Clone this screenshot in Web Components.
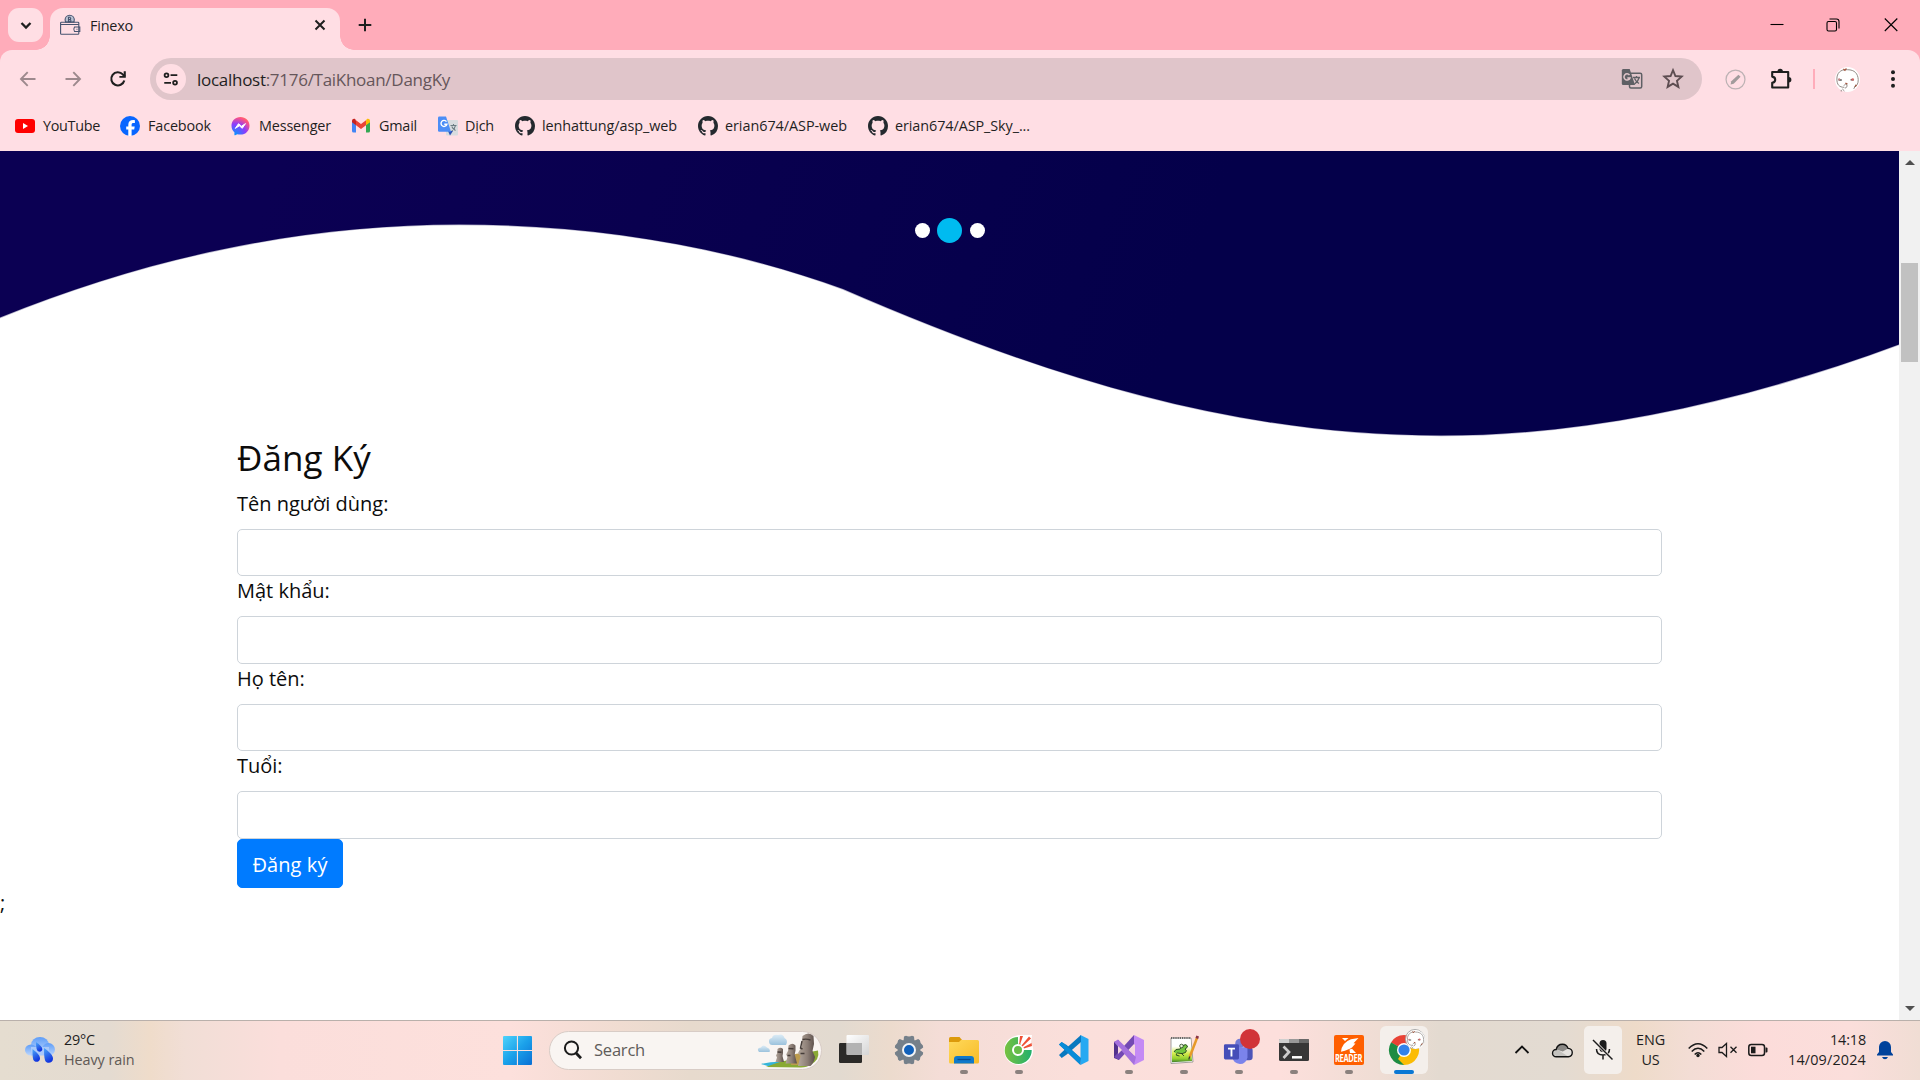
<!DOCTYPE html>
<html lang="vi">
<head>
<meta charset="utf-8">
<title>Finexo</title>
<style>
html,body{margin:0;padding:0;width:1920px;height:1080px;overflow:hidden;background:#fff}
body{display:flex;flex-direction:column;font-family:"Open Sans","Noto Sans",sans-serif;color:#1f1f1f}
</style>
</head>
<body>
<tab-strip><browser-tab>Finexo</browser-tab></tab-strip>
<tool-bar></tool-bar>
<bookmark-bar>
<book-mark icon="youtube" w="57">YouTube</book-mark>
<book-mark icon="facebook" w="63">Facebook</book-mark>
<book-mark icon="messenger" w="72">Messenger</book-mark>
<book-mark icon="gmail" w="38">Gmail</book-mark>
<book-mark icon="gtranslate" w="29">Dịch</book-mark>
<book-mark icon="github" w="135">lenhattung/asp_web</book-mark>
<book-mark icon="github" w="122">erian674/ASP-web</book-mark>
<book-mark icon="github" w="135">erian674/ASP_Sky_...</book-mark>
</bookmark-bar>
<page-view>
<hero-wave></hero-wave>
<signup-form>
<form-field>Tên người dùng:</form-field>
<form-field>Mật khẩu:</form-field>
<form-field>Họ tên:</form-field>
<form-field>Tuổi:</form-field>
</signup-form>
</page-view>
<task-bar></task-bar>
<script>
const ICONS={
youtube:['0 0 20 20','<rect y="3" width="20" height="14" rx="3" fill="#f00"/><path d="M8 7v6l5-3z" fill="#fff"/>'],
facebook:['0 0 20 20','<circle cx="10" cy="10" r="10" fill="#0866ff"/><path d="M8.3 20v-6.6H6.2v-3h2.1V9c0-3.5 1.6-5 4.9-5 .5 0 1.3.1 1.7.2v2.7h-1.3c-1.5 0-2 .6-2 2v1.5h3.1l-.5 3h-2.6V20c-1 .1-2.300.1-3.300 0z" fill="#fff"/>'],
messenger:['0 0 20 20','<defs><radialGradient id="m" cx=".2" cy="1" r="1.1"><stop offset="0" stop-color="#09f"/><stop offset=".55" stop-color="#8a3cff"/><stop offset=".9" stop-color="#ff5280"/><stop offset="1" stop-color="#ff7061"/></radialGradient></defs><path d="M9.500 1C4.300 1 .5 4.800.5 9.700c0 2.700 1.100 5 2.900 6.600v2.400c0 .4.400.6.800.5l2-1c1 .3 2.100.4 3.300.4 5.200 0 9-3.900 9-8.900S14.700 1 9.500 1z" fill="url(#m)"/><path d="M4.300 12.400 7.500 7.700l3 2.500 4-2.600-3.200 4.700-3-2.500z" fill="#fff" stroke="#fff" stroke-width="1" stroke-linejoin="round"/>'],
gmail:['0 0 20 20','<path d="M1 5.500V15q0 1.500 1.500 1.500H5V8.600z" fill="#4285f4"/><path d="M15 8.600v7.900h2.500Q19 16.500 19 15V5.500z" fill="#34a853"/><path d="M15 4.500v4.700l4-3V4.800c0-1.800-2-2.600-3.300-1.600z" fill="#fbbc04"/><path d="M1 6.200l4 3V4.500l-.7-1.300C3 2.200 1 3 1 4.800z" fill="#c5221f"/><path d="M5 9.200V4.300L10 8l5-3.700v4.900L10 13z" fill="#ea4335"/>'],
gtranslate:['0 0 20 20','<rect x="8" y="4" width="12" height="15.500" rx="1" fill="#d8dcdf"/><path d="M10 15h5l-3 4.500z" fill="#3054b5"/><path d="M1.200.5H8l5 15.200H1.200Q0 15.700 0 14.500V1.700Q0 .5 1.200.5z" fill="#4c8df6"/><path d="M8.500 5.700A3 3 0 1 0 8.900 8.300H6.300" fill="none" stroke="#fff" stroke-width="1.400"/><path d="M12.500 9.500h6M15.500 8v1.500M17.500 9.700c-.6 2.500-2 4-3.700 5M13.800 10.500c.8 2 2.200 3.200 3.700 4" fill="none" stroke="#6b7d83" stroke-width="1.100"/>'],
github:['0 0 16 16','<path fill="#24292e" d="M8 0C3.580 0 0 3.580 0 8c0 3.540 2.290 6.530 5.470 7.590.4.070.55-.170.55-.380 0-.190-.010-.820-.010-1.490-2.010.370-2.530-.490-2.690-.940-.090-.230-.480-.940-.820-1.130-.280-.150-.680-.520-.010-.530.630-.010 1.080.580 1.230.820.720 1.210 1.870.870 2.330.660.070-.520.280-.870.510-1.070-1.780-.2-3.640-.890-3.640-3.950 0-.870.310-1.590.820-2.150-.080-.2-.360-1.020.080-2.120 0 0 .670-.210 2.200.820.640-.180 1.320-.270 2-.270s1.360.090 2 .270c1.530-1.040 2.200-.820 2.200-.820.440 1.100.160 1.920.080 2.120.510.560.820 1.270.820 2.150 0 3.070-1.870 3.750-3.650 3.950.290.250.540.730.540 1.480 0 1.070-.010 1.930-.010 2.200 0 .210.150.460.550.380A8.010 8.010 0 0 0 16 8c0-4.420-3.580-8-8-8z"/>'],
down:['0 0 20 20','<path d="M5.500 8l4.500 4.500L14.500 8" fill="none" stroke="#1f1f1f" stroke-width="2.300"/>'],
wallet:['0 0 20 20','<g fill="none" stroke="#46536f" stroke-width="1.100"><circle cx="9.700" cy="4.800" r="4.600" fill="#b9c1d1"/><rect x=".6" y="7.300" width="18.200" height="12" rx=".8" fill="#ffdee4"/><path d="M.6 9.500h18.200M5 7h9.500M14.500 12h5.300v4.500h-5.300q-1.500-2.200 0-4.500zM16.500 14.200h1"/><path d="M8.500 2.300v4.500h1.800q1.200-1.100 0-2.200 1-1.300-.2-2.300zM8.500 4.600h2"/></g>'],
close:['0 0 20 20','<path d="M5.500 5.500l9 9m0-9l-9 9" stroke="#1f1f1f" stroke-width="2"/>'],
plus:['0 0 20 20','<path d="M10 3.700v12.600M3.700 10h12.600" stroke="#1f1f1f" stroke-width="2"/>'],
min:['0 0 20 20','<path d="M3.500 9.500h13" stroke="#000" stroke-width="1.100"/>'],
restore:['0 0 20 20','<g fill="none" stroke="#000" stroke-width="1.100"><rect x="4" y="6.500" width="9.500" height="9.500" rx="1.500"/><path d="M6.500 4h7q2.500 0 2.500 2.500v7"/></g>'],
winclose:['0 0 20 20','<path d="M3.800 3.500l12.500 12.500m0-12.500L3.800 16" stroke="#000" stroke-width="1.100"/>'],
back:['0 0 20 20','<path d="M17.500 10H3.500M9.700 3.200L3 10l6.700 6.800" fill="none" stroke="#9d898d" stroke-width="1.900"/>'],
fwd:['0 0 20 20','<path d="M2.500 10h14M10.300 3.200L17 10l-6.700 6.800" fill="none" stroke="#9d898d" stroke-width="1.900"/>'],
reload:['0 0 20 20','<path d="M16.300 11.500A6.600 6.600 0 1 1 14.800 5.400L17 7.500" fill="none" stroke="#1f1f1f" stroke-width="2.100"/><path d="M17.800 2.300v6.400h-6.400V7h4.300V2.300z" fill="#1f1f1f"/>'],
tune:['0 0 20 20','<g fill="none" stroke="#1f1f1f" stroke-width="2"><circle cx="5" cy="5.800" r="2.100"/><path d="M9.500 5.800h7.500M2.500 14.200H10"/><circle cx="14.500" cy="14.200" r="2.100"/></g>'],
omtranslate:['0 0 22 22','<rect x="8.500" y="5.300" width="12.200" height="14.800" rx="1.500" fill="none" stroke="#5f6065" stroke-width="1.500"/><path d="M2.200 1h6.500l5.300 16H2.200Q.8 17 .8 15.500v-13Q.8 1 2.200 1z" fill="#5f6065"/><path d="M8.500 7A3.100 3.100 0 1 0 9 9.900H6.300" fill="none" stroke="#e0c5ca" stroke-width="1.500"/><path d="M12 9.500h7M15.500 8v1.500M18 10c-.7 2.700-2.300 4.500-4.500 6M13.500 10.500c1 2.200 2.500 3.800 4.500 5" fill="none" stroke="#5f6065" stroke-width="1.300"/>'],
star:['0 0 20 20','<path d="M10 2l2.200 5.300 5.700.5-4.300 3.800 1.300 5.600L10 14.200l-4.900 3 1.300-5.600L2.100 7.800l5.700-.5z" fill="none" stroke="#5d4d51" stroke-width="1.700"/>'],
pencil:['0 0 20 20','<circle cx="10" cy="10" r="9" fill="none" stroke="#bdb2b4" stroke-width="1.200"/><path d="M5.300 14.700l.7-3 6.800-6.300 2 2-6.500 6.600z" fill="#a29b9c"/>'],
puzzle:['0 0 22 22','<path d="M2.200 4h16v15.500h-16v-4.700q3-.5 3-3.100t-3-3.100z" fill="none" stroke="#1f1f1f" stroke-width="2.100" stroke-linejoin="round"/><path d="M7.500 3.500a2.700 2.700 0 0 1 5.400 0zM18.700 9a2.700 2.700 0 0 1 0 5.400z" fill="#1f1f1f"/>'],
avatar:['0 0 24 24','<circle cx="12" cy="12" r="12" fill="#fff"/><g fill="none" stroke="#8c8480" stroke-width=".9"><path d="M12 2.600C5 2 1.800 6 1.800 11.500S4 19.500 9 19.500M12 2.600c7 0 10 4 10.300 9.400.1 4-1.300 6.300-4 7.500M8.500 18q2-3.200 3-1t-2 3.500M7 21l2 2M20 17l-2 4M6 22v1.500"/></g><path d="M3.500 12.500h3M15 12.200h3" stroke="#555" stroke-width="1.300"/><circle cx="4" cy="12" r="1.100" fill="#c78585"/><circle cx="17" cy="12" r="1.300" fill="#d26868"/><path d="M8 2l2 1.500M11 1.500L9.500 3M10 15.500l2 .8M20.500 17l-1 2" stroke="#a6573f" stroke-width="1.200"/>'],
kebab:['0 0 20 20','<circle cx="10" cy="3.200" r="2" fill="#1f1f1f"/><circle cx="10" cy="10" r="2" fill="#1f1f1f"/><circle cx="10" cy="16.800" r="2" fill="#1f1f1f"/>'],
rain:['0 0 30 28','<defs><linearGradient id="c" x2="0" y2="1"><stop stop-color="#5e9df8"/><stop offset="1" stop-color="#bcd6fc"/></linearGradient><linearGradient id="d" x2=".4" y2="1"><stop stop-color="#4daaf8"/><stop offset="1" stop-color="#1236df"/></linearGradient></defs><ellipse cx="15" cy="9" rx="9" ry="8" fill="url(#c)"/><ellipse cx="6" cy="14" rx="6" ry="5.500" fill="url(#c)"/><ellipse cx="23.500" cy="13.500" rx="6.500" ry="6.500" fill="url(#c)"/><rect x="6" y="11" width="18" height="8.500" fill="#a9c9fa"/><g fill="url(#d)"><path d="M11 6c4 3 6.300 5 6.300 7.300 0 3-4.300 3-5.300.7-.8-2-1-5-1-8z"/><path d="M7.500 13c5 4 7.500 6.500 7.500 9.500 0 4-5.600 4.500-6.800 1-.7-2.500-.7-7-.7-10.500z"/><path d="M19 12c6 4.500 9 7.500 9 10.800 0 4.600-6.500 5.500-8 1.400-1-3-1-8-1-12.200z"/></g>'],
start:['0 0 29 29','<defs><linearGradient id="g" x2="1" y2="1"><stop stop-color="#4fd3fb"/><stop offset=".5" stop-color="#1ba1ea"/><stop offset="1" stop-color="#0a6fd4"/></linearGradient></defs><path d="M1 0h12.900v13.900H0V1q0-1 1-1zM15 0h13q1 0 1 1v12.900H15zM0 15h13.900v14H1q-1 0-1-1zM15 15h14v13q0 1-1 1H15z" fill="url(#g)"/>'],
search:['0 0 20 20','<circle cx="8.500" cy="8" r="6.600" fill="none" stroke="#1b1b1b" stroke-width="2"/><path d="M13 13l5 5.300" stroke="#1b1b1b" stroke-width="2.800"/>'],
moai:['0 0 62 34','<defs><linearGradient id="s"><stop stop-color="#b3a79b"/><stop offset=".55" stop-color="#8d7f77"/><stop offset="1" stop-color="#594d48"/></linearGradient><linearGradient id="k" x2="0" y2="1"><stop stop-color="#ddecf6"/><stop offset="1" stop-color="#9bc2dc"/></linearGradient></defs><path d="M16 12a3 3 0 0 1-1-7q1-4 6-3 5-2 6.500 3 4 2 1.500 7z" fill="url(#k)"/><path d="M2 19q-3-4 2-4.500 2-4 6 0 4 1.500 2.500 4.500z" fill="url(#k)"/><path d="M4 31q12-3 24-2v5H14z" fill="#35b4d8"/><path d="M9 34q14-6 29-8 12-7 23-8.500 2 9-7 14-4 3-10 3z" fill="#89a934"/><path d="M35 22q8-3 13-1v11H34z" fill="#bc9b4e"/><g fill="url(#s)"><path d="M20.500 16q3-2.500 5.500 0v4l-.5 3 1.500 6h-8.500l1.500-4.500-1-2 1.300-2.500z"/><path d="M31.500 12.500q4-3.500 7 0v5l-.8 4 2.300 9H28.500l2-6.500-1.300-2.500 2-4z"/><path d="M45.500 3q6-5 11 0l.5 8-1.500 7 2.500 6q-1 6-4.500 9H41l2.500-10-2.500-3 3.500-6z"/></g><path d="M45.500 6.500q4-1 8 .5M45 8l-1.500 7 2 1M31.500 15.500l5 .3M30.500 22.500h3M20.500 19l4 .2M43.500 20.500h4" fill="none" stroke="#463d39" stroke-width="1.400"/>'],
taskview:['0 0 30 30','<defs><linearGradient id="t" x2="1" y2="1"><stop stop-color="#fff"/><stop offset="1" stop-color="#d5d5d5"/></linearGradient></defs><rect y="8" width="23" height="20" rx="1.200" fill="#2b2a28"/><rect x="7.500" width="22.500" height="20" rx="1" fill="url(#t)"/><path d="M8 8h15v12H8z" fill="#b3b3b3"/>'],
gear:['0 0 30 30','<g fill="#75808a"><circle cx="15" cy="15" r="11"/><path d="M10 1.500l2-.8q3 1.600 6 0l2 .8.500 5h-11zM10 28.500l2 .8q3-1.600 6 0l2-.8.500-5h-11z"/><path d="M10 1.500l2-.8q3 1.600 6 0l2 .8.500 5h-11zM10 28.500l2 .8q3-1.600 6 0l2-.8.500-5h-11z" transform="rotate(60 15 15)"/><path d="M10 1.500l2-.8q3 1.600 6 0l2 .8.500 5h-11zM10 28.500l2 .8q3-1.600 6 0l2-.8.500-5h-11z" transform="rotate(120 15 15)"/></g><circle cx="15" cy="15" r="6" fill="#1061bb" stroke="#f1f3f5" stroke-width="2"/>'],
explorer:['0 0 30 30','<defs><linearGradient id="f" x2="1" y2="1"><stop stop-color="#ffd95b"/><stop offset="1" stop-color="#f7bb27"/></linearGradient></defs><path d="M0 3.500Q0 2 1.500 2h9l2.500 3v7H0z" fill="#dc9a0b"/><path d="M0 7h10l2-2h16.500q1.500 0 1.500 1.500v20.500q0 1.500-1.500 1.500h-27Q0 28.500 0 27z" fill="url(#f)"/><path d="M5 28.500V24q0-3 3-3h14q3 0 3 3v4.500z" fill="#1079ca"/><path d="M8.500 24.500h13" stroke="#084c8f" stroke-width="1.300"/>'],
coccoc:['0 0 30 30','<defs><linearGradient id="e" x2="1"><stop stop-color="#78c13f"/><stop offset="1" stop-color="#22b06d"/></linearGradient></defs><path d="M15 0l13 0-1 8q3 4 2 9-2 12-14 13Q1 29 0 15 1 2 15 0z" fill="#fff"/><path d="M14 2a13.500 13.500 0 1 0 13.700 13h-8.500l-3-6.500L14 9z" fill="url(#e)"/><circle cx="14" cy="15" r="5" fill="#67bd49" stroke="#fff" stroke-width="2"/><path d="M16 1h3l-2.800 8h-1zM25 1.500l2 2-8.500 8-1-1zM27.500 8l.5 3-8 2.500-.5-1.200z" fill="#ef5136"/>'],
vscode:['0 0 30 30','<path d="M21.500 0l8 4v22l-8 4z" fill="#26a9f2"/><path d="M0 9.500L2.700 7l5 3L21.500 23v7L9 18z" fill="#117ec4"/><path d="M0 20l2.700 3 5-3.500L22 7V0L8 12.500z" fill="#0878bf"/><path d="M2.700 7L22 23l-1 6.500L0 9.500z" fill="#078bd8"/>'],
vs:['0 0 30 30','<path d="M0 7l5-2v20l-5-2z" fill="#52318c"/><path d="M20 0l10 5v20l-10 5z" fill="#c48af5"/><path d="M0 22L20 0v9L5 25z" fill="#7349b3"/><path d="M0 7l4-2.500L22 22l-2 8z" fill="#a571dd"/><path d="M4 11v8l4-4zM21 9l-6 6 6 6z" fill="#f4d5df"/>'],
npp:['0 0 30 30','<defs><linearGradient id="n" x2="0" y2="1"><stop offset=".3" stop-color="#fff"/><stop offset=".6" stop-color="#d9ee52"/><stop offset=".85" stop-color="#8fce2d"/><stop offset="1" stop-color="#3f7d2d"/></linearGradient></defs><path d="M2 3h20l2 24-22 1.500z" fill="#fff" stroke="#8b8b86" stroke-width=".8"/><path d="M3 4.500h18.500L23 26 3 27.300z" fill="url(#n)"/><path d="M2 3h20" stroke="#666" stroke-dasharray="1.200 1" stroke-width="1.800"/><path d="M5 17q1-3.500 6-3l3-3.500q3-2 4.500.5 0 2-2.500 3 2.500 1.500.5 3.500-3 2-8 .5-2 1-1 2.300l3 .7M12 18l3 3" fill="#72c43f" stroke="#24421f" stroke-width=".9"/><circle cx="12.500" cy="11" r="1.800" fill="#e8f6d8" stroke="#24421f" stroke-width=".8"/><path d="M28 3L20.700 22" stroke="#e69a28" stroke-width="2.500"/><path d="M28.700 1l-.9 2.500" stroke="#8c3445" stroke-width="2.800"/><path d="M20.700 21.500l-.9 3" stroke="#333" stroke-width="1.200"/>'],
teams:['0 0 34 34','<circle cx="18" cy="10" r="5" fill="#737bd5"/><rect x="21" y="14" width="10.500" height="14" rx="3.500" fill="#4d55b8"/><path d="M10 14h16v11q-1.500 7-8 7-7-1-8-7z" fill="#7b83eb"/><rect x="1" y="11" width="16" height="16" rx="1.500" fill="#464eb8"/><path d="M5.300 15.500h7.400M9 15.500v8.500" stroke="#fff" stroke-width="2"/>'],
terminal:['0 0 30 22','<rect width="30" height="22" rx="1.500" fill="#373737"/><path d="M1 0h9v4H0V1q0-1 1-1z" fill="#cfcfcf"/><path d="M10 0h10v4H10z" fill="#999"/><path d="M20 0h9q1 0 1 1v3H20z" fill="#686868"/><path d="M4.500 7.500L10 13l-5.500 6" fill="none" stroke="#ccc" stroke-width="2.700"/><path d="M13 18.300h10" stroke="#fff" stroke-width="2.500"/>'],
foxit:['0 0 30 30','<rect width="30" height="30" rx="2" fill="#ff5f00"/><path d="M24.500 3L17 4.200Q7.800 7.500 7 16.800 15.500 14.500 18 12.500l3.500-4-2-.2zM8 3h6.500L11 6zM15.500 14.500l2.500-.8 4 4.300h-6z" fill="#fff"/>'],
chrome:['0 0 30 30','<path d="M15 15L2 7.500A15 15 0 0 1 28 7.500z" fill="#e94235"/><path d="M15 15L28 7.500A15 15 0 0 1 15 30z" fill="#fbbc05"/><path d="M15 15v15A15 15 0 0 1 2 7.500z" fill="#1d8c43"/><path d="M15 15L22 19 15 30 9 24z" fill="#fbbc05"/><path d="M15 15l-6.500 4L2 7.500z" fill="#1d8c43"/><path d="M15 8h13v-1H15z" fill="#e94235"/><circle cx="15" cy="15" r="7" fill="#fff"/><circle cx="15" cy="15" r="5.600" fill="#3382ea"/>'],
up:['0 0 16 16','<path d="M1.500 11L8 4.500l6.500 6.500" fill="none" stroke="#111" stroke-width="1.800"/>'],
cloud:['0 0 20 14','<path d="M4 13a3.500 3.500 0 0 1 0-7q1-5 6-5 4 0 5.300 4 4 .3 4 4T15.500 13z" fill="#e5e2de"/><path d="M4 6q1-5 6-5 4 0 5.300 4l-5 3z" fill="#8b8986"/><path d="M1 10q1-4 5-3.500L15 12.500H4z" fill="#c4c2be"/><path d="M4 13a3.500 3.500 0 0 1 0-7q1-5 6-5 4 0 5.300 4 4 .3 4 4T15.500 13z" fill="none" stroke="#111" stroke-width="1.300"/>'],
mic:['0 0 22 22','<rect x="7.500" y="1" width="7" height="12" rx="3.500" fill="#1b1b1b"/><path d="M4.500 10q0 6 6.500 6t6.500-6M11 16v4.500" fill="none" stroke="#1b1b1b" stroke-width="1.500"/><path d="M1 1l19.500 19.500" stroke="#f4efeb" stroke-width="3"/><path d="M1 1l19.500 19.500" stroke="#1b1b1b" stroke-width="1.500"/>'],
wifi:['0 0 20 16','<g fill="none" stroke="#1b1b1b" stroke-width="1.500"><path d="M.7 6.500q9.300-9.500 18.600 0M3.700 9.500q6.300-6.500 12.600 0M6.700 12.400q3.300-3.500 6.600 0"/></g><circle cx="10" cy="13.500" r="1.700" fill="#1b1b1b"/>'],
mute:['0 0 20 16','<g fill="none" stroke="#1b1b1b" stroke-width="1.300"><path d="M1 5.500h3l4.500-4v13L4 10.500H1zM12.500 4.800l6 6m0-6l-6 6"/></g>'],
battery:['0 0 20 14','<rect x=".8" y="1.500" width="15.700" height="11" rx="2.500" fill="none" stroke="#1b1b1b" stroke-width="1.500"/><rect x="3" y="3.700" width="4.500" height="6.600" fill="#1b1b1b"/><path d="M17.500 4.500h1q1 0 1 1v3q0 1-1 1h-1z" fill="#1b1b1b"/>'],
bell:['0 0 18 20','<path d="M3 7a6 6 0 0 1 12 0v5l2 2.500v1H1v-1L3 12zM6 17h6q-1 2.200-3 2.200T6 17z" fill="#00429b"/>']
};
const comp=(name,css,html,after)=>customElements.define(name,class extends HTMLElement{
  constructor(){super();this.attachShadow({mode:'open'})}
  connectedCallback(){
    this.shadowRoot.innerHTML=`<style>*,:host{box-sizing:border-box}${css}</style>`+(typeof html==='function'?html(this):html);
    if(after)after(this);
  }
});
const ic=(n,w=20,h=w)=>`<ui-icon name="${n}" w="${w}" h="${h}"></ui-icon>`;

comp('tab-strip',`:host{display:flex;align-items:flex-start;height:50px;flex:none;background:#ffacba;padding-left:8px}
.menu{width:35px;height:34px;margin-top:8px;border-radius:11px;background:#ffdee4;display:grid;place-items:center}
.new{margin:15px 0 0 15px}.win{margin-left:auto;display:flex;gap:38px;padding:15px 19px 0 0}.win :first-child{margin-right:-2px}`,
`<div class="menu">${ic('down')}</div><slot></slot><div class="new">${ic('plus')}</div><div class="win">${ic('min')}${ic('restore')}${ic('winclose')}</div>`);

comp('browser-tab',`:host{display:flex;width:290px;height:42px;margin:8px 0 0 7px;background:#ffdee4;border-radius:13px 13px 0 0;align-items:flex-start;padding:7px 10px;font-size:14.400px;position:relative}
:host::before,:host::after{content:"";position:absolute;bottom:0;width:14px;height:14px}
:host::before{left:-14px;background:radial-gradient(circle at 0 0,transparent 13.500px,#ffdee4 14px)}
:host::after{right:-14px;background:radial-gradient(circle at 100% 0,transparent 13.500px,#ffdee4 14px)}
fit-text{margin-left:10px;line-height:21px}.x{margin-left:auto}`,
h=>`${ic('wallet')}<fit-text w="43">${h.textContent}</fit-text><span class="x">${ic('close')}</span>`);

comp('tool-bar',`:host{display:block;height:54px;flex:none;background:#ffacba}
.bar{height:54px;background:#ffdee4;border-radius:12px 12px 0 0;display:flex;align-items:center;padding:4px 17px 0 18px}
.nav{display:flex;gap:25px}.omni{height:42px;width:1552px;margin-left:22px;border-radius:21px;background:#e0c5ca;display:flex;align-items:center;padding:0 18px 0 6px;font-size:17px;color:#66565a}
.site{width:30px;height:30px;border-radius:50%;background:#ffdee4;display:grid;place-items:center;margin-right:11px}
.omni b{font-weight:inherit;color:#1f1f1f}.right{margin-left:auto;display:flex;gap:19px;align-items:center}
.ext{display:flex;align-items:center;flex:1;padding-left:23px}.sep{width:2px;height:20px;background:#ffacba;margin:0 20px 0 21px}`,
`<div class="bar"><div class="nav">${ic('back')}${ic('fwd')}${ic('reload')}</div><div class="omni"><span class="site">${ic('tune',18)}</span><fit-text w="253"><b>localhost</b>:7176/TaiKhoan/DangKy</fit-text><span class="right">${ic('omtranslate',22)}${ic('star',22)}</span></div>
<div class="ext">${ic('pencil',21)}<span style="width:24px"></span>${ic('puzzle',22)}<span class="sep"></span>${ic('avatar',25)}<span style="width:22.500px"></span>${ic('kebab',20)}</div></div>`);

comp('bookmark-bar',`:host{display:flex;gap:20px;height:47px;flex:none;background:#ffdee4;padding:0 15px;align-items:center;font-size:14.400px}`,`<slot></slot>`);
comp('book-mark',`:host{display:flex;gap:8px;align-items:center;line-height:20px;padding-bottom:4px}
:host([icon=github]),:host([icon=gtranslate]){gap:7px;padding-left:1px}`,
h=>`${ic(h.getAttribute('icon'))}<fit-text w="${h.getAttribute('w')}">${h.textContent}</fit-text>`);

comp('page-view',`:host{display:flex;height:869px;flex:none;background:#fff}
.body{width:1899px;display:flex;flex-direction:column}.sb{width:21px;background:#f1f1f1;display:flex;flex-direction:column;align-items:center;padding:9px 0}
.u,.d{border:5px solid transparent}.u{border-top:0;border-bottom:5px solid #505050}.d{border-bottom:0;border-top:5px solid #505050;margin-top:auto}
.th{width:17px;height:99px;margin-top:98px;background:#c1c1c1}`,
`<div class="body"><slot></slot></div><div class="sb"><i class="u"></i><i class="th"></i><i class="d"></i></div>`);

comp('hero-wave',`:host{display:block;height:286px;width:1899px;flex:none;position:relative}svg{display:block}
.dots{position:absolute;top:66.500px;left:0;right:0;display:flex;justify-content:center;align-items:center;gap:7.500px}
i{width:15px;height:15px;border-radius:50%;background:#fff}i.on{width:25px;height:25px;background:#00bbf0}`,
`<svg width="1899" height="286" viewBox="0 151 1899 286"><defs><linearGradient id="bg" gradientUnits="userSpaceOnUse" x1="300" y1="100" x2="1150" y2="400"><stop stop-color="#0b0053"/><stop offset=".4" stop-color="#09004f"/><stop offset="1" stop-color="#04004a"/></linearGradient></defs>
<path fill="url(#bg)" stroke="#0a0050" stroke-opacity=".3" stroke-width="1.500" d="M-2 149V318L0 317.500C150 256.500 306 224.500 459 224.500C590 224.500 722 245 843 289C1042 375 1230 435.600 1441 435.600C1590 435.600 1745 401.500 1899 344.500L1901 344V149z"/></svg><div class="dots"><i></i><i class="on"></i><i></i></div>`);

comp('signup-form',`:host{display:block;font-size:20px;line-height:30px;color:#0c0c0c}
.c{width:1425px;margin-left:237px}h3{font-weight:400;font-size:35px;line-height:42px;margin:0 0 9.700px}
button{display:block;font:500 20px/30px "Open Sans",sans-serif;color:#fff;background:#007bff;border:1px solid #007bff;border-radius:5px;width:106px;height:49px;padding:3px 0 0;text-align:center}`,
`<div class="c"><h3><fit-text w="134">Đăng Ký</fit-text></h3><slot></slot><button><fit-text w="75">Đăng ký</fit-text></button></div><div>;</div>`);
comp('form-field',`:host{display:block}label{display:block;margin-bottom:10px}input{display:block;width:100%;height:47.500px;border:1px solid #ced4da;border-radius:5px;background:#fff;padding:0 15px;outline:0}`,
h=>`<label>${h.textContent}</label><input>`);

comp('task-app',`:host{width:55px;height:100%;display:flex;flex-direction:column;align-items:center;justify-content:center}
.w{width:48px;height:48px;display:grid;place-items:center;border-radius:6px;position:relative}
:host([active]) .w{background:#f4efeb}
.run{position:absolute;bottom:0;width:8px;height:4px;border-radius:2px;background:#8b817e}
:host([active]) .run{width:20px;background:#0a78d4}
.red{position:absolute;left:25px;top:3px;width:20px;height:20px;border-radius:50%;background:#d13438}
.av{position:absolute;right:3px;top:3px;width:20px;height:20px;border-radius:50%;border:1px solid #aaa;display:grid;place-items:center}
.rd{position:absolute;left:10.500px;top:27px;font:700 10px/10px "Open Sans",sans-serif;color:#fff;transform:scaleX(.75);transform-origin:0 0}`,
h=>{const n=h.getAttribute('name'),w=n=='teams'?32:30;return `<div class="w">${ic(n,w,n=='terminal'?22:w)}${n=='foxit'?'<span class="rd"><fit-text w="36">READER</fit-text></span>':''}${n=='teams'?'<i class="red"></i>':''}${n=='chrome'?`<span class="av">${ic('avatar',19)}</span>`:''}${h.hasAttribute('run')?'<i class="run"></i>':''}</div>`});

comp('task-bar',`:host{display:flex;height:60px;flex:none;border-top:1px solid #b9b0ab;align-items:center;padding-bottom:1px;background:linear-gradient(90deg,#e5ddd0 0,#e4dbd1 110px,#efdcca 150px,#f1ded6 185px,#fbdedb 280px,#fde0dc 510px,#f0dcd1 620px,#e7dacd 690px,#e2dad0 840px,#ecdbcd 890px,#f4ddd7 940px,#fbdfdb 1080px,#fddfdc 1280px,#efddd4 1380px,#e3dad0 1440px,#e3dbd2 1560px,#eedbc9 1635px,#f3ddd5 1690px,#fcdcda 1760px,#fbdedb 1850px,#f0ddd4 1920px);font-size:14.400px;line-height:20px}
.wx{display:flex;gap:9px;align-items:center;width:503px;padding-left:25px}.wx div{display:flex;flex-direction:column;align-items:flex-start;padding-bottom:1px}.g{color:#605955}
.search{width:273px;height:39px;margin:0 4px 0 17px;border-radius:20px;background:#f9f5f2;border:1px solid #d8ccc6;display:flex;align-items:center;padding:0 2px 0 13px;font-size:16.500px;color:#605c5a}
.search fit-text{margin-left:11px}.search .m{margin-left:auto}.apps{display:flex;height:58px}
.tray{margin-left:auto;display:flex;align-items:center;padding-right:26px}
.mic{width:38px;height:48px;margin:0 14px 0 11px;border-radius:5px;background:#f4efeb;display:grid;place-items:center}
.two{display:flex;flex-direction:column;align-items:center}.time{align-items:flex-end;margin:0 10px 0 20px;padding-bottom:1px}`,
`<div class="wx">${ic('rain',30,28)}<div><fit-text w="31">29°C</fit-text><fit-text class="g" w="70.500">Heavy rain</fit-text></div></div>${ic('start',29)}
<div class="search">${ic('search',20)}<fit-text w="51">Search</fit-text><span class="m">${ic('moai',62,34)}</span></div>
<div class="apps">${['taskview','gear'].map(n=>`<task-app name="${n}"></task-app>`).join('')}${['explorer','coccoc','vscode','vs','npp','teams','terminal','foxit'].map(n=>`<task-app name="${n}" ${n=='vscode'?'':'run'}></task-app>`).join('')}<task-app name="chrome" run active></task-app></div>
<div class="tray">${ic('up',16)}<span style="width:22px"></span>${ic('cloud',21,15)}<span class="mic">${ic('mic',22)}</span><div class="two"><fit-text w="29">ENG</fit-text><fit-text w="18">US</fit-text></div><span style="width:23px"></span>${ic('wifi',20,16)}<span style="width:10px"></span>${ic('mute',20,16)}<span style="width:10px"></span>${ic('battery',20,14)}
<div class="two time"><fit-text w="36">14:18</fit-text><fit-text w="78">14/09/2024</fit-text></div>${ic('bell',18,20)}</div>`);

comp('ui-icon',`:host{display:block;flex:none}svg{display:block;overflow:visible}`,h=>{const [v,s]=ICONS[h.getAttribute('name')];return `<svg viewBox="${v}" width="${h.getAttribute('w')}" height="${h.getAttribute('h')}">${s}</svg>`});

// Spreads its text over the width given in px by adjusting the tracking.
comp('fit-text',`:host{display:inline-block;white-space:nowrap}`,`<slot></slot>`,h=>{
  const target=+h.getAttribute('w'),n=h.textContent.length,r=document.createRange();
  r.selectNodeContents(h);
  const scale=h.textContent==='READER'?.75:1;
  const now=r.getBoundingClientRect().width/scale;
  h.style.letterSpacing=((target-now)/n).toFixed(3)+'px';h.style.width=target+'px';
});
</script>
</body>
</html>
